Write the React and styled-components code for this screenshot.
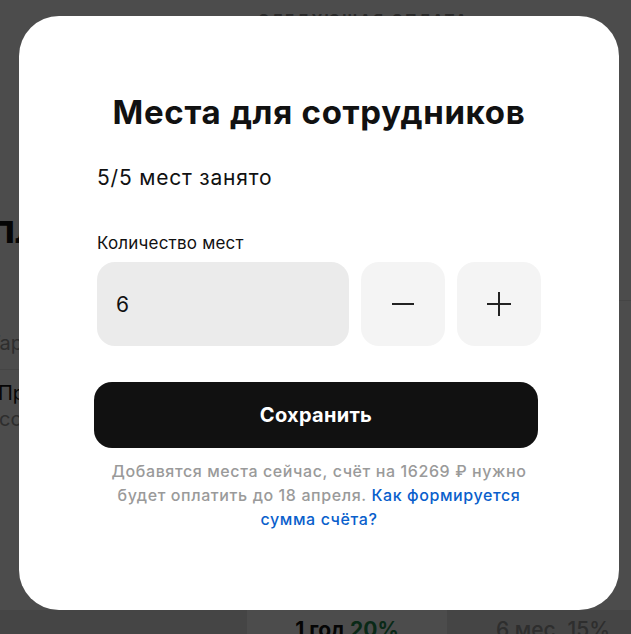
import React from "react";
import styled, { createGlobalStyle } from "styled-components";

const Global = createGlobalStyle`
  html, body { margin: 0; padding: 0; }
  body { font-family: Inter, "Noto Sans", Arial, sans-serif; background: #fff; }
  #root { width: 631px; height: 634px; }
`;

const Page = styled.div`
  position: relative;
  width: 631px;
  height: 634px;
  overflow: hidden;
  background: #fff;
`;

const Backdrop = styled.div`
  display: flex;
  flex-direction: column;
  height: 100%;
`;

const TopLabel = styled.div`
  margin: 11px 0 0 258px;
  font-size: 15px;
  line-height: 18px;
  font-weight: 700;
  letter-spacing: 2.3px;
  color: #8a8a8a;
  text-transform: uppercase;
`;

const Columns = styled.div`
  flex: 1;
  display: grid;
  grid-template-columns: 200px 1fr;
`;

const LeftCol = styled.div`
  display: flex;
  flex-direction: column;
`;

const BigHeading = styled.div`
  margin: 175px 0 0 -40px;
  font-size: 40px;
  font-weight: 700;
  color: #111;
`;

const SideText = styled.div`
  margin: ${(p) => p.$mt || 0}px 0 0 ${(p) => p.$ml || 0}px;
  font-size: 20px;
  color: ${(p) => (p.$dark ? "#111" : "#999")};
`;

const Divider = styled.div`
  height: 1px;
  background: #e6e6e6;
  margin-top: ${(p) => p.$mt}px;
`;

const RightCol = styled.div`
  display: flex;
  flex-direction: column;
`;

const Tabs = styled.div`
  margin-top: auto;
  display: flex;
  background: #e6e6e6;
  height: 40px;
  margin-bottom: -16px;
  padding-left: 247px;
`;

const Tab = styled.div`
  width: 200px;
  flex-shrink: 0;
  background: ${(p) => (p.$active ? "#fff" : "transparent")};
  color: ${(p) => (p.$active ? "#111" : "#999")};
  font-size: 21px;
  font-weight: ${(p) => (p.$active ? 700 : 500)};
  display: flex;
  justify-content: center;
  padding-top: 7px;
  margin-left: ${(p) => (p.$active ? 0 : 6)}px;
  box-sizing: border-box;
`;

const Green = styled.span`
  color: #1e8a4f;
`;

const Dim = styled.div`
  position: absolute;
  top: 0;
  left: 0;
  width: 631px;
  height: 634px;
  background-color: #000000;
  opacity: 0.7;
`;

const Layer = styled.div`
  position: absolute;
  top: 0;
  left: 0;
  width: 631px;
  height: 634px;
  display: flex;
  align-items: flex-start;
  padding: 16px 0 0 19px;
  box-sizing: border-box;
`;

const Modal = styled.div`
  width: 600px;
  height: 594px;
  box-sizing: border-box;
  background: #fff;
  border-radius: 40px;
  padding: 76px 78px 0;
  display: flex;
  flex-direction: column;
`;

const Title = styled.h2`
  margin: 0;
  text-align: center;
  font-size: 33px;
  line-height: 40px;
  font-weight: 700;
  color: #111;
  letter-spacing: 0.7px;
`;

const Occupied = styled.div`
  margin-top: 32px;
  font-size: 21px;
  line-height: 28px;
  letter-spacing: 0.8px;
  color: #111;
`;

const Label = styled.div`
  margin-top: 41px;
  font-size: 17px;
  line-height: 20px;
  letter-spacing: 0.2px;
  color: #111;
`;

const Row = styled.div`
  margin-top: 9px;
  display: flex;
  gap: 12px;
`;

const Field = styled.div`
  flex: 1;
  height: 84px;
  border-radius: 18px;
  background: #ebebeb;
  display: flex;
  align-items: center;
  padding-left: 19px;
  font-size: 21px;
  color: #111;
`;

const StepButton = styled.button`
  width: 84px;
  height: 84px;
  border: none;
  border-radius: 18px;
  background: #f4f4f4;
  display: flex;
  align-items: center;
  justify-content: center;
  padding: 0;
`;

const SaveButton = styled.button`
  margin: 36px 3px 0 -3px;
  height: 66px;
  border: none;
  border-radius: 18px;
  background: #111;
  color: #fff;
  font-family: inherit;
  font-size: 20px;
  font-weight: 700;
  letter-spacing: 0.3px;
`;

const Note = styled.p`
  margin: 11px 0 0;
  text-align: center;
  font-size: 16px;
  line-height: 24px;
  font-weight: 500;
  letter-spacing: 0.6px;
  color: #9a9a9a;
`;

const Link = styled.a`
  color: #0a5fcc;
  text-decoration: none;
`;

const Minus = () => (
  <svg width="24" height="24" viewBox="0 0 24 24">
    <path d="M1 12h22" stroke="#222" strokeWidth="2" />
  </svg>
);

const Plus = () => (
  <svg width="24" height="24" viewBox="0 0 24 24">
    <path d="M0 12h24M12 0v24" stroke="#222" strokeWidth="2" />
  </svg>
);

export default function App() {
  return (
    <Page>
      <Global />
      <Backdrop>
        <TopLabel>Следующая оплата</TopLabel>
        <Columns>
          <LeftCol>
            <BigHeading>Оплата</BigHeading>
            <SideText $mt={78} $ml={-12}>Тариф</SideText>
            <Divider $mt={14} />
            <SideText $mt={11} $ml={-2} $dark>Пробный</SideText>
            <SideText $mt={2} $ml={-1}>сотрудников</SideText>
          </LeftCol>
          <RightCol>
            <Divider $mt={271} />
          </RightCol>
        </Columns>
        <Tabs>
          <Tab $active>
            1 год&nbsp;<Green>20%</Green>
          </Tab>
          <Tab>6 мес. 15%</Tab>
        </Tabs>
      </Backdrop>
      <Dim />
      <Layer>
        <Modal>
          <Title>Места для сотрудников</Title>
          <Occupied>5/5 мест занято</Occupied>
          <Label>Количество мест</Label>
          <Row>
            <Field>6</Field>
            <StepButton aria-label="Уменьшить">
              <Minus />
            </StepButton>
            <StepButton aria-label="Увеличить">
              <Plus />
            </StepButton>
          </Row>
          <SaveButton>Сохранить</SaveButton>
          <Note>
            Добавятся места сейчас, счёт на 16269 ₽ нужно
            <br />
            будет оплатить до 18 апреля. <Link href="#">Как формируется</Link>
            <br />
            <Link href="#">сумма счёта?</Link>
          </Note>
        </Modal>
      </Layer>
    </Page>
  );
}
